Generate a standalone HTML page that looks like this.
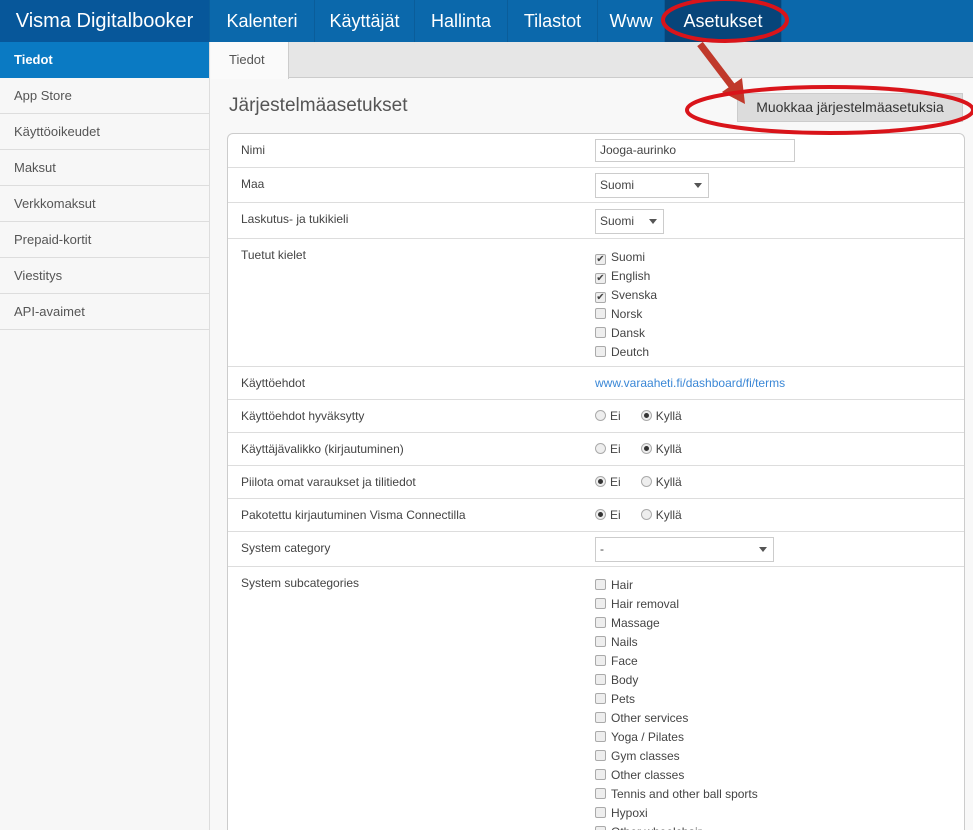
<!DOCTYPE html>
<html style="width:973px;height:830px;overflow:hidden"><head><meta charset="utf-8"><style>
*{box-sizing:border-box;margin:0;padding:0}
body{width:973px;height:830px;overflow:hidden;background:#f8f8f8;font-family:"Liberation Sans",sans-serif;color:#444;position:relative}
.nav{position:absolute;left:0;top:0;width:973px;height:42px;background:#0b68ab}
.nav div{position:absolute;top:0;height:42px;line-height:42px;color:#fff;font-size:18px;text-align:center;border-right:1px solid #0a5d9a}
.side{position:absolute;left:0;top:42px;width:210px;height:788px;background:#f7f7f7;border-right:1px solid #ddd}
.side div{height:36px;line-height:36px;padding-left:14px;font-size:13px;color:#555;border-bottom:1px solid #ddd}
.side .act{background:#0a7ac3;color:#fff;font-weight:bold;border-bottom:none}
.tabbar{position:absolute;left:211px;top:42px;width:762px;height:36px;background:#e6e6e6;border-bottom:1px solid #ccc}
.tab{position:absolute;left:211px;top:42px;width:78px;height:37px;background:#fafafa;border-right:1px solid #ccc;line-height:36px;padding-left:18px;font-size:13px;color:#555}
h1{position:absolute;left:229px;top:95px;font-size:19px;font-weight:normal;color:#555}
.btn{position:absolute;left:737px;top:93px;width:226px;height:29px;background:#dcdcdc;border:1px solid #ccc;font-size:14px;line-height:27px;text-align:center;color:#333}
.panel{position:absolute;left:227px;top:133px;width:738px;height:720px;background:#fff;border:1px solid #ccc;border-radius:6px}
.row{position:absolute;left:0;width:736px;border-bottom:1px solid #ddd;font-size:12px}
.row .l{position:absolute;left:13px;top:9px}
.v{position:absolute;left:367px}
.inp{position:absolute;border:1px solid #ccc;height:23px;line-height:21px;padding-left:4px;font-size:12px;color:#444;background:#fff}
.car{position:absolute;right:6px;top:9px;width:0;height:0;border-left:4px solid transparent;border-right:4px solid transparent;border-top:5px solid #555}
.cb{position:absolute;left:367px;font-size:12px;line-height:19px}
.cb span{display:inline-block;width:11px;height:11px;border:1px solid #aaa;border-radius:2px;background:#eee;margin-right:5px;vertical-align:-1px;position:relative;font-size:10px;line-height:9px;text-align:center}
.rd{display:inline-block;width:11px;height:11px;border:1px solid #aaa;border-radius:50%;background:#eee;margin-right:4px;vertical-align:-1px;position:relative}
.rd.on::after{content:"";position:absolute;left:2px;top:2px;width:5px;height:5px;border-radius:50%;background:#333}
a{color:#3a87d6;text-decoration:none}
</style></head><body>
<div class="nav">
<div style="left:0;width:210px;background:#07579a;font-size:20px">Visma Digitalbooker</div>
<div style="left:210px;width:105px">Kalenteri</div>
<div style="left:315px;width:100px">Käyttäjät</div>
<div style="left:415px;width:93px">Hallinta</div>
<div style="left:508px;width:90px">Tilastot</div>
<div style="left:598px;width:67px">Www</div>
<div style="left:665px;width:117px;background:#07457a">Asetukset</div>
</div>
<div class="side">
<div class="act">Tiedot</div><div>App Store</div><div>Käyttöoikeudet</div><div>Maksut</div><div>Verkkomaksut</div><div>Prepaid-kortit</div><div>Viestitys</div><div>API-avaimet</div>
</div>
<div class="tabbar"></div><div class="tab">Tiedot</div>
<h1>Järjestelmäasetukset</h1>
<div class="btn">Muokkaa järjestelmäasetuksia</div>
<div class="panel">
<div class="row" style="top:0;height:34px"><span class="l">Nimi</span><div class="inp" style="left:367px;top:5px;width:200px">Jooga-aurinko</div></div>
<div class="row" style="top:34px;height:35px"><span class="l">Maa</span><div class="inp" style="left:367px;top:5px;width:114px;height:25px;line-height:23px">Suomi<i class="car"></i></div></div>
<div class="row" style="top:69px;height:36px"><span class="l">Laskutus- ja tukikieli</span><div class="inp" style="left:367px;top:6px;width:69px;height:25px;line-height:23px">Suomi<i class="car"></i></div></div>
<div class="row" style="top:105px;height:128px"><span class="l">Tuetut kielet</span>
<div class="cb" style="top:9px"><span>✔</span>Suomi<br><span>✔</span>English<br><span>✔</span>Svenska<br><span></span>Norsk<br><span></span>Dansk<br><span></span>Deutch</div></div>
<div class="row" style="top:233px;height:33px"><span class="l">Käyttöehdot</span><a class="v" style="top:9px" >www.varaaheti.fi/dashboard/fi/terms</a></div>
<div class="row" style="top:266px;height:33px"><span class="l">Käyttöehdot hyväksytty</span><span class="v" style="top:9px"><i class="rd"></i>Ei&nbsp;&nbsp;&nbsp;&nbsp;&nbsp;&nbsp;<i class="rd on"></i>Kyllä</span></div>
<div class="row" style="top:299px;height:33px"><span class="l">Käyttäjävalikko (kirjautuminen)</span><span class="v" style="top:9px"><i class="rd"></i>Ei&nbsp;&nbsp;&nbsp;&nbsp;&nbsp;&nbsp;<i class="rd on"></i>Kyllä</span></div>
<div class="row" style="top:332px;height:33px"><span class="l">Piilota omat varaukset ja tilitiedot</span><span class="v" style="top:9px"><i class="rd on"></i>Ei&nbsp;&nbsp;&nbsp;&nbsp;&nbsp;&nbsp;<i class="rd"></i>Kyllä</span></div>
<div class="row" style="top:365px;height:33px"><span class="l">Pakotettu kirjautuminen Visma Connectilla</span><span class="v" style="top:9px"><i class="rd on"></i>Ei&nbsp;&nbsp;&nbsp;&nbsp;&nbsp;&nbsp;<i class="rd"></i>Kyllä</span></div>
<div class="row" style="top:398px;height:35px"><span class="l">System category</span><div class="inp" style="left:367px;top:5px;width:179px;height:25px;line-height:23px">-<i class="car"></i></div></div>
<div class="row" style="top:433px;height:300px;border-bottom:none"><span class="l">System subcategories</span>
<div class="cb" style="top:9px"><span></span>Hair<br><span></span>Hair removal<br><span></span>Massage<br><span></span>Nails<br><span></span>Face<br><span></span>Body<br><span></span>Pets<br><span></span>Other services<br><span></span>Yoga / Pilates<br><span></span>Gym classes<br><span></span>Other classes<br><span></span>Tennis and other ball sports<br><span></span>Hypoxi<br><span></span>Other wheelchair</div></div>
</div>
<svg style="position:absolute;left:0;top:0" width="973" height="830">
<ellipse cx="725" cy="20" rx="62" ry="21" fill="none" stroke="#d9141a" stroke-width="4"/>
<path d="M700 44 L735 90" stroke="#c0392b" stroke-width="7" fill="none"/>
<path d="M722 92 L745 104 L742 78 Z" fill="#c0392b"/>
<ellipse cx="830" cy="110" rx="143" ry="23" fill="none" stroke="#d9141a" stroke-width="4"/>
</svg>
</body></html>
